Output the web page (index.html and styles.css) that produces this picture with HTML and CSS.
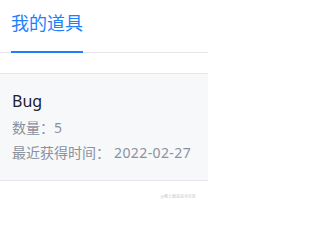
FILE: index.html
```html
<!DOCTYPE html>
<html lang="zh-CN">
<head>
<meta charset="utf-8">
<link rel="stylesheet" href="styles.css">
</head>
<body>
<div class="header">
  <div class="tab">我的道具</div>
</div>
<div class="card">
  <div class="name">Bug</div>
  <div class="meta">数量：5</div>
  <div class="meta">最近获得时间：<span class="date">2022-02-27</span></div>
</div>
<div class="watermark">@稀土掘金技术社区</div>
</body>
</html>
```
FILE: styles.css
```css
html, body {
  margin: 0;
  padding: 0;
  background: #ffffff;
}
body {
  font-family: "Noto Sans", "Noto Sans CJK SC", sans-serif;
  width: 208px;
  height: 208px;
  position: relative;
  overflow: hidden;
}
.header {
  display: flex;
  height: 52px;
  padding-left: 11px;
  border-bottom: 1px solid #e4e6eb;
}
.tab {
  font-size: 18px;
  line-height: 26px;
  color: #1e80ff;
  padding-top: 10px;
  padding-bottom: 15px;
  border-bottom: 2px solid #1e80ff;
  margin-bottom: -1px;
  height: 26px;
}
.card {
  margin-top: 20px;
  background: #f7f8fa;
  border-top: 1px solid #e4e6eb;
  border-bottom: 1px solid #e4e6eb;
  padding: 16px 12px 16px;
}
.name {
  font-size: 16px;
  line-height: 22px;
  color: #1d2129;
  margin-bottom: 5px;
}
.meta {
  font-size: 14px;
  line-height: 22px;
  color: #8a919f;
}
.meta + .meta {
  margin-top: 3px;
}
.date {
  margin-left: 4px;
  letter-spacing: 0.4px;
}
.watermark {
  position: absolute;
  right: 12px;
  bottom: 9px;
  font-size: 4px;
  line-height: 4px;
  color: #c8c8c8;
}
```
